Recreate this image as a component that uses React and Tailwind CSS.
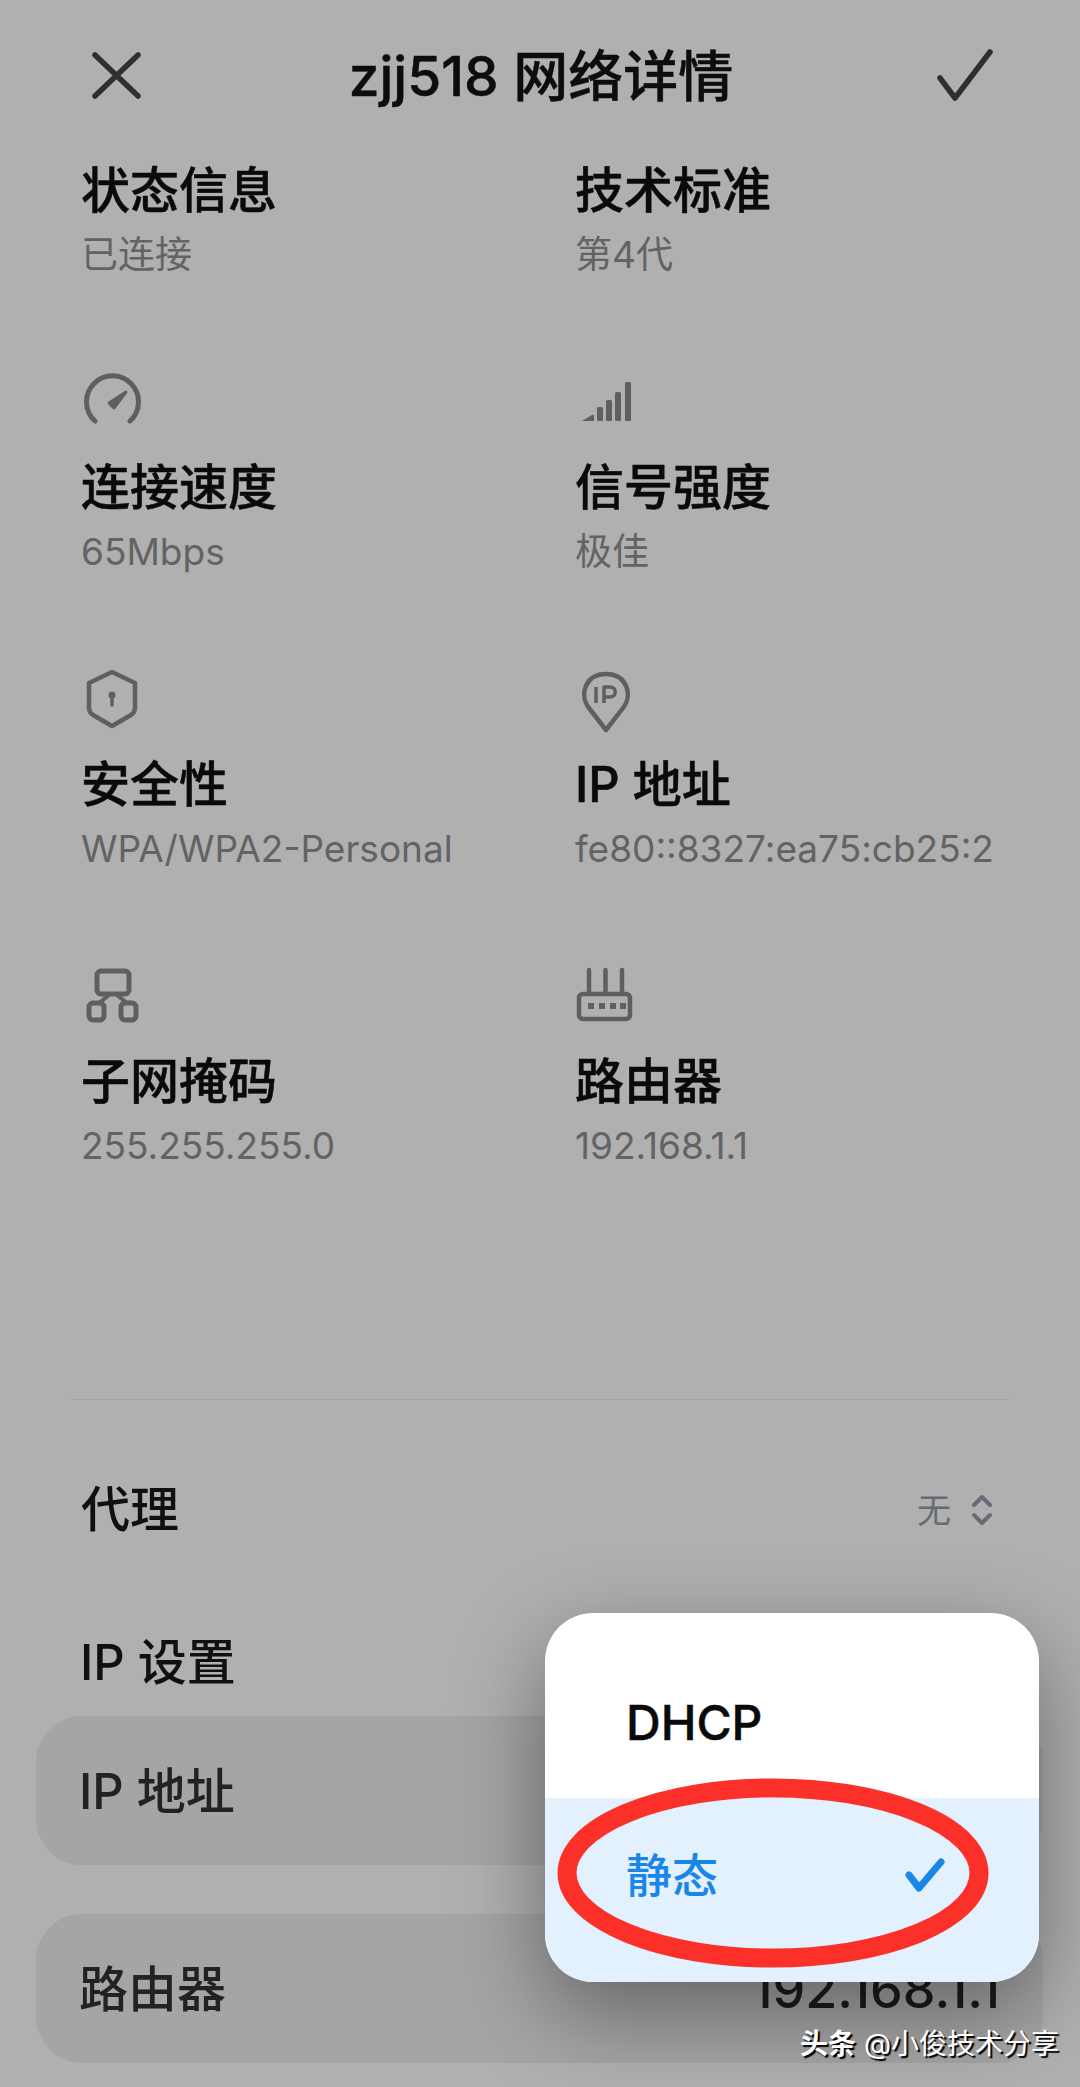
import React from 'react'

const font = "font-['Inter','Noto_Sans_CJK_SC',sans-serif]"

const GaugeIcon = () => (
  <svg width="60" height="64" viewBox="0 0 60 64" fill="none" stroke="#5f5f5f" strokeWidth="5" strokeLinecap="round">
    <path d="M14 53 A26 26 0 1 1 49 53" />
    <path d="M28 35 L45 24 L33 40 Z" fill="#5f5f5f" strokeWidth="3" strokeLinejoin="round" />
  </svg>
)

const SignalIcon = () => (
  <svg width="60" height="64" viewBox="0 0 60 64" fill="#5f5f5f">
    <path d="M7 53 L17 47 Q19 46 19 48 V53 Z" />
    <rect x="22" y="39" width="6" height="14" rx="1.5" />
    <rect x="31" y="32" width="6" height="21" rx="1.5" />
    <rect x="40" y="24" width="6" height="29" rx="1.5" />
    <rect x="50" y="14" width="6" height="39" rx="1.5" />
  </svg>
)

const ShieldIcon = () => (
  <svg width="60" height="64" viewBox="0 0 60 64" fill="none" stroke="#5f5f5f" strokeWidth="4.5" strokeLinejoin="round">
    <path d="M31 7 L54 18 V43 Q54 47 50 50 L31 61 L12 50 Q8 47 8 43 V18 Z" />
    <circle cx="31" cy="30" r="3.5" fill="#5f5f5f" stroke="none" />
    <path d="M31 30 V40" strokeWidth="3.5" strokeLinecap="round" />
  </svg>
)

const PinIcon = () => (
  <svg width="60" height="68" viewBox="0 0 60 68" fill="none" stroke="#5f5f5f" strokeWidth="4.5" strokeLinejoin="round">
    <path d="M31 65 L14 43 C4 30 10 9 31 9 C52 9 58 30 48 43 Z" />
    <path d="M21 22 V38 M29 38 V22 H35 C42 22 42 32 35 32 H29" strokeWidth="3.5" />
  </svg>
)

const SubnetIcon = () => (
  <svg width="60" height="64" viewBox="0 0 60 64" fill="none" stroke="#5f5f5f" strokeWidth="5">
    <rect x="16" y="9" width="32" height="23" rx="4" />
    <rect x="8" y="41" width="15" height="17" rx="4" />
    <rect x="40" y="41" width="15" height="17" rx="4" />
    <path d="M28 33 L17 42 M36 33 L47 42" strokeWidth="4" />
  </svg>
)

const RouterIcon = () => (
  <svg width="60" height="64" viewBox="0 0 60 64" fill="none" stroke="#5f5f5f" strokeWidth="4.5" strokeLinecap="round">
    <path d="M14 8 V30 M30.500 8 V30 M47 8 V30" />
    <rect x="4" y="32" width="51" height="25" rx="4" />
    <g fill="#5f5f5f" stroke="none">
      <rect x="13" y="41" width="6" height="6" />
      <rect x="24" y="41" width="6" height="6" />
      <rect x="35" y="41" width="6" height="6" />
      <rect x="45" y="41" width="6" height="6" />
    </g>
  </svg>
)

const items = [
  { label: '状态信息', value: '已连接' },
  { label: '技术标准', value: '第4代' },
  { icon: <GaugeIcon />, label: '连接速度', value: '65Mbps' },
  { icon: <SignalIcon />, label: '信号强度', value: '极佳' },
  { icon: <ShieldIcon />, label: '安全性', value: 'WPA/WPA2-Personal' },
  { icon: <PinIcon />, label: 'IP 地址', value: 'fe80::8327:ea75:cb25:2' },
  { icon: <SubnetIcon />, label: '子网掩码', value: '255.255.255.0' },
  { icon: <RouterIcon />, label: '路由器', value: '192.168.1.1' },
]

const App = () => {
  return (
    <div className={`relative w-[1080px] h-[2087px] overflow-hidden bg-[#b0b0b0] ${font}`}>
      {/* Header */}
      <div className="flex items-center justify-between h-[152px] pl-[86px] pr-[84px]">
        <svg width="60" height="60" viewBox="0 0 60 60" fill="none" stroke="#2f2f2f" strokeWidth="5.500" strokeLinecap="round">
          <path d="M9 9 L52 50 M52 9 L9 50" />
        </svg>
        <h1 className="text-[55px] leading-[64px] font-medium [-webkit-text-stroke:0.5px_#0d0d0d] text-[#0d0d0d]">zjj518 网络详情</h1>
        <svg width="60" height="60" viewBox="0 0 60 60" fill="none" stroke="#2f2f2f" strokeWidth="5.500" strokeLinecap="round" strokeLinejoin="round">
          <path d="M4 32 L19 52 L54 6" />
        </svg>
      </div>

      {/* Details grid */}
      <div className="grid grid-cols-[494px_1fr] gap-y-[89px] pl-[81px] mt-[7px]">
        {items.map((item) => (
          <div key={item.label}>
            {item.icon && <div className="h-[64px] mb-[24px]">{item.icon}</div>}
            <div className="text-[49px] leading-[64px] font-medium [-webkit-text-stroke:0.5px_#0a0a0a] text-[#0a0a0a]">{item.label}</div>
            <div className="mt-[8px] text-[37px] leading-[48px] whitespace-nowrap text-[#636363]">{item.value}</div>
          </div>
        ))}
      </div>

      <div className="mt-[229px] mx-[70px] h-px bg-[#a2a2a2]" />

      {/* Proxy */}
      <div className="flex items-center justify-between mt-[78px] h-[64px] pl-[81px] pr-[87px]">
        <span className="text-[49px] leading-[64px] font-medium text-[#101010]">代理</span>
        <span className="flex items-center gap-[20px] text-[34px] text-[#666b78]">
          无
          <svg width="22" height="32" viewBox="0 0 22 32" fill="none" stroke="#666b78" strokeWidth="4" strokeLinecap="round" strokeLinejoin="round">
            <path d="M3 11 L11 3 L19 11 M3 21 L11 29 L19 21" />
          </svg>
        </span>
      </div>

      <div className="mt-[89px] pl-[80px] text-[49px] leading-[64px] font-medium text-[#101010]">IP 设置</div>

      {/* Static IP fields */}
      <div className="mt-[21px] mx-[36px] w-[1007px] h-[149px] flex items-center pt-[2px] px-[43px] rounded-[46px] bg-[#a5a5a5]">
        <span className="text-[49px] font-medium text-[#222222]">IP 地址</span>
      </div>
      <div className="mt-[49px] mx-[36px] w-[1007px] h-[149px] flex items-center justify-between pt-[2px] px-[43px] rounded-[46px] bg-[#a5a5a5]">
        <span className="text-[49px] font-medium text-[#222222]">路由器</span>
        <span className="text-[52px] font-medium text-[#1c1c1c]">192.168.1.1</span>
      </div>

      {/* Dropdown */}
      <div className="absolute left-[545px] top-[1613px] w-[494px] h-[369px] rounded-[48px] overflow-hidden bg-white shadow-[0_30px_90px_rgba(0,0,0,0.4)]">
        <div className="h-[185px] flex items-center pt-[35px] pl-[81px] text-[48px] font-medium [-webkit-text-stroke:0.5px_#0a0a0a] text-[#0a0a0a]">DHCP</div>
        <div className="h-[184px] flex items-center justify-between pb-[30px] pl-[81px] pr-[94px] bg-[#e3f0fd]">
          <span className="text-[46px] font-medium text-[#1a87e8]">静态</span>
          <svg width="40" height="34" viewBox="0 0 40 34" fill="none" stroke="#1a87e8" strokeWidth="7" strokeLinecap="round" strokeLinejoin="round">
            <path d="M4 17 L14 30 L36 4" />
          </svg>
        </div>
      </div>

      {/* Red annotation */}
      <svg className="absolute left-[550px] top-[1770px]" width="450" height="206" viewBox="0 0 450 206" fill="none">
        <ellipse cx="223" cy="103" rx="206" ry="85" stroke="#fb3129" strokeWidth="19" />
      </svg>

      {/* Watermark */}
      <div className="absolute left-[800px] top-[2024px] text-[28px] leading-[40px] whitespace-nowrap text-white [text-shadow:2px_2px_1px_#000]">
        <span className="font-bold">头条</span> @小俊技术分享
      </div>
    </div>
  )
}

export default App
